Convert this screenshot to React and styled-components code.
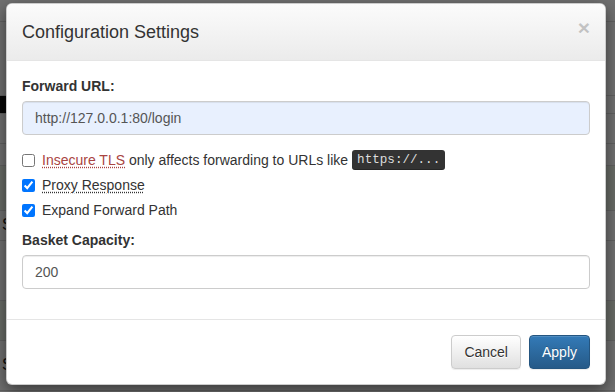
import React from 'react';
import styled, { createGlobalStyle } from 'styled-components';

const GlobalStyle = createGlobalStyle`
  html, body {
    margin: 0;
    padding: 0;
  }
  body {
    width: 615px;
    height: 392px;
    overflow: hidden;
    font-family: "Liberation Sans", Arial, sans-serif;
    font-size: 14px;
    line-height: 1.42857;
    color: #333;
    background: #fff;
  }
  * {
    box-sizing: border-box;
  }
`;

const Screen = styled.div`
  position: relative;
  width: 615px;
  height: 392px;
  overflow: hidden;
`;

/* the page behind the backdrop, only faint stripes are visible */
const Page = styled.div`
  display: flex;
  flex-direction: column;
  height: 100%;
`;

const PageRow = styled.div`
  height: ${p => p.h}px;
  border-bottom: 1px solid #ddd;
  background: ${p => p.bg || '#fff'};
  font-size: 16px;
  padding-left: 2px;
  display: flex;
  align-items: center;
  color: #222;
`;

const DarkStrip = styled.div`
  width: 120px;
  height: 100%;
  margin-left: -2px;
  background: #111;
`;

const Backdrop = styled.div`
  position: absolute;
  inset: 0;
  background: rgba(0, 0, 0, 0.56);
  display: flex;
  align-items: flex-start;
  padding: 3px 9px 0 6px;
`;

const Modal = styled.div`
  width: 600px;
  background: #fff;
  border: 1px solid rgba(0, 0, 0, 0.2);
  border-radius: 6px;
  box-shadow: 0 5px 15px rgba(0, 0, 0, 0.5);
  overflow: hidden;
`;

const Header = styled.div`
  display: flex;
  align-items: flex-start;
  padding: 15px;
  border-bottom: 1px solid #e5e5e5;
  background: linear-gradient(to bottom, #fbfbfb 0%, #ebebeb 100%);
`;

const Title = styled.h4`
  flex: 1;
  margin: 0;
  font-size: 18px;
  font-weight: 500;
  line-height: 26px;
  color: #333;
`;

const Close = styled.button`
  border: 0;
  background: transparent;
  padding: 0;
  margin-top: -2px;
  font-family: "Liberation Sans", Arial, sans-serif;
  font-size: 21px;
  font-weight: bold;
  line-height: 1;
  color: #000;
  opacity: 0.2;
  text-shadow: 0 1px 0 #fff;
  cursor: pointer;
`;

const Body = styled.div`
  padding: 15px;
`;

const FormGroup = styled.div`
  margin-bottom: 15px;
`;

const Label = styled.label`
  display: inline-block;
  margin-bottom: 5px;
  font-weight: bold;
  line-height: 20px;
`;

const Input = styled.input`
  display: block;
  width: 100%;
  height: 34px;
  padding: 6px 12px;
  font-family: "Liberation Sans", Arial, sans-serif;
  font-size: 14px;
  color: #555;
  background: ${p => (p.autofilled ? '#e8f0fe' : '#fff')};
  border: 1px solid #ccc;
  border-radius: 4px;
  box-shadow: inset 0 1px 1px rgba(0, 0, 0, 0.075);
  outline: none;
`;

const Checks = styled.div`
  display: flex;
  flex-direction: column;
  gap: 5px;
  margin-bottom: 10px;
`;

const CheckRow = styled.label`
  display: flex;
  align-items: center;
  min-height: 20px;
  line-height: 20px;
  cursor: pointer;
`;

const Box = styled.input`
  width: 13px;
  height: 13px;
  margin: 0 7px 0 0;
  accent-color: #0075ff;
`;

const Hint = styled.abbr`
  text-decoration: underline dotted;
  text-underline-offset: 2px;
  color: ${p => (p.warn ? '#a94442' : 'inherit')};
  cursor: help;
`;

const Text = styled.span`
  white-space: pre;
`;

const Kbd = styled.kbd`
  margin-left: 4px;
  padding: 2px 5px;
  font-family: "Liberation Mono", "Courier New", monospace;
  font-size: 12.6px;
  font-weight: normal;
  line-height: 16px;
  color: #ddd;
  background: #333;
  border-radius: 3px;
  box-shadow: inset 0 -1px 0 rgba(0, 0, 0, 0.25);
`;

const Footer = styled.div`
  display: flex;
  justify-content: flex-end;
  gap: 8px;
  padding: 15px;
  border-top: 1px solid #e5e5e5;
`;

const Button = styled.button`
  height: 34px;
  padding: 6px 12px;
  font-family: "Liberation Sans", Arial, sans-serif;
  font-size: 14px;
  line-height: 20px;
  border-radius: 4px;
  cursor: pointer;
  color: ${p => (p.primary ? '#fff' : '#333')};
  border: 1px solid ${p => (p.primary ? '#245580' : '#ccc')};
  background: ${p =>
    p.primary
      ? 'linear-gradient(to bottom, #337ab7 0%, #265a88 100%)'
      : 'linear-gradient(to bottom, #fff 0%, #e0e0e0 100%)'};
  text-shadow: ${p => (p.primary ? '0 -1px 0 rgba(0,0,0,.2)' : '0 1px 0 #fff')};
  box-shadow: inset 0 1px 0 rgba(255, 255, 255, 0.15), 0 1px 1px rgba(0, 0, 0, 0.075);
`;

const rows = [
  { h: 22 },
  { h: 74 },
  { h: 18, strip: true },
  { h: 30 },
  { h: 22 },
  { h: 45, bg: '#eef5ea' },
  { h: 30, text: 'S' },
  { h: 60 },
  { h: 40, bg: '#eef5ea' },
  { h: 50, text: 'S' }
];

export default function App() {
  return (
    <Screen>
      <GlobalStyle />
      <Page>
        {rows.map((r, i) => (
          <PageRow key={i} h={r.h} bg={r.bg}>
            {r.strip ? <DarkStrip /> : r.text}
          </PageRow>
        ))}
      </Page>
      <Backdrop>
        <Modal>
          <Header>
            <Title>Configuration Settings</Title>
            <Close aria-label="Close">&times;</Close>
          </Header>
          <Body>
            <FormGroup>
              <Label htmlFor="fwd">Forward URL:</Label>
              <Input id="fwd" autofilled defaultValue="http://127.0.0.1:80/login" />
            </FormGroup>
            <Checks>
              <CheckRow>
                <Box type="checkbox" />
                <Hint warn title="Skip TLS certificate verification">
                  Insecure TLS
                </Hint>
                <Text> only affects forwarding to URLs like</Text>
                <Kbd>https://...</Kbd>
              </CheckRow>
              <CheckRow>
                <Box type="checkbox" defaultChecked />
                <Hint title="Return the response of the forward URL">Proxy Response</Hint>
              </CheckRow>
              <CheckRow>
                <Box type="checkbox" defaultChecked />
                <Text>Expand Forward Path</Text>
              </CheckRow>
            </Checks>
            <FormGroup>
              <Label htmlFor="cap">Basket Capacity:</Label>
              <Input id="cap" defaultValue="200" />
            </FormGroup>
          </Body>
          <Footer>
            <Button>Cancel</Button>
            <Button primary>Apply</Button>
          </Footer>
        </Modal>
      </Backdrop>
    </Screen>
  );
}
